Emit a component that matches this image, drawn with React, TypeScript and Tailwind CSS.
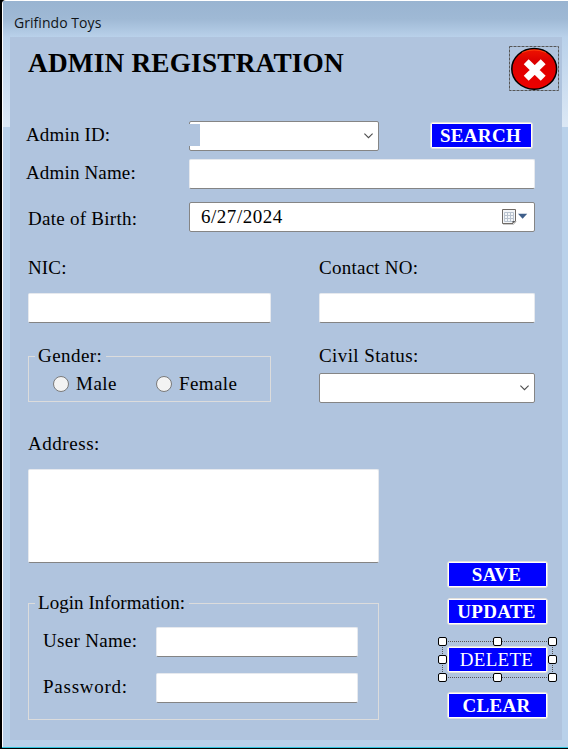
import type { ReactNode } from 'react';

function Label({ children, className = '' }: { children: ReactNode; className?: string }) {
  return <span className={`block whitespace-nowrap text-[19px] leading-[22px] ${className}`}>{children}</span>;
}

function TextBox({ className = '' }: { className?: string }) {
  return (
    <div
      className={`shrink-0 rounded-[2px] border border-[#e6e9ee] border-b-[#848484] bg-white ${className}`}
    />
  );
}

function Chevron() {
  return (
    <svg width="9" height="6" viewBox="0 0 9 6" fill="none" className="shrink-0">
      <path d="M0.4 0.6 4.5 4.7 8.6 0.6" stroke="#4d4d4d" strokeWidth="1.1" />
    </svg>
  );
}

function ComboBox({ className = '', children }: { className?: string; children?: ReactNode }) {
  return (
    <div
      className={`relative flex h-[30px] shrink-0 items-center justify-end rounded-[2px] border border-[#858585] bg-white pr-[5px] ${className}`}
    >
      {children}
      <Chevron />
    </div>
  );
}

function ActionButton({ children, className = '' }: { children: ReactNode; className?: string }) {
  return (
    <div
      className={`h-[27px] shrink-0 rounded-[3px] border border-[#e4e2de] bg-white p-px text-white ${className}`}
    >
      <div className="flex h-[23px] items-center justify-center bg-[#0000ff] pr-[2px] text-[19px] leading-[22px]">
        {children}
      </div>
    </div>
  );
}

function Radio({ label, className = '' }: { label: string; className?: string }) {
  return (
    <div className="flex items-center gap-[7px]">
      <span className="size-4 rounded-full border border-[#7a7a7a] bg-[#f3f3f3]" />
      <Label className={className}>{label}</Label>
    </div>
  );
}

function GroupBox({
  title,
  className = '',
  titleClassName = '',
  children,
}: {
  title: string;
  className?: string;
  titleClassName?: string;
  children: ReactNode;
}) {
  return (
    <div className={`flex flex-col border border-t-0 border-[#dcdcdc] ${className}`}>
      <div className="flex h-px shrink-0 items-center">
        <span className="h-px w-[6px] bg-[#dcdcdc]" />
        <Label className={`pr-[4px] pb-[2px] pl-[3px] ${titleClassName}`}>{title}</Label>
        <span className="h-px flex-1 bg-[#dcdcdc]" />
      </div>
      {children}
    </div>
  );
}

function CalendarIcon() {
  return (
    <svg width="26" height="16" viewBox="0 0 26 16" className="shrink-0">
      <path d="M1 15.500h10.500l3-3" stroke="#000" strokeOpacity="0.2" fill="none" />
      <path d="M0.500 0.500h13v11.500l-2.500 2.500h-10.500z" fill="#f4f6f8" stroke="#6f6a66" />
      <path
        d="M2.500 3.500h9v9h-9zM5.500 3.500v9M8.500 3.500v9M2.500 6.500h9M2.500 9.500h9"
        stroke="#b9c3cf"
        fill="none"
      />
      <path d="M10.500 14.500v-2.500h3z" fill="#555" />
      <path d="M16 4.700h9.200l-4.600 5z" fill="#3f5f8a" />
    </svg>
  );
}

function CloseButton() {
  return (
    <svg width="50" height="45" viewBox="0 0 50 45" className="shrink-0">
      <defs>
        <linearGradient id="closeFill" x1="0" y1="0" x2="0" y2="1">
          <stop offset="0" stopColor="#f01400" />
          <stop offset="0.3" stopColor="#dc0000" />
          <stop offset="1" stopColor="#ee0000" />
        </linearGradient>
      </defs>
      <rect x="0.5" y="0.5" width="49" height="44" fill="none" stroke="#555" strokeDasharray="3 1" />
      <ellipse cx="25.200" cy="22.900" rx="22.400" ry="20.300" fill="url(#closeFill)" stroke="#000" strokeWidth="1.500" />
      <path d="M13 6.500Q25 1.500 37 6.500" fill="none" stroke="#ff4a10" strokeWidth="0.800" />
      <path d="M17.200 15.700 34.200 32.300M34.200 15.700 17.200 32.300" stroke="#fff" strokeWidth="7" fill="none" />
    </svg>
  );
}

const handleSpots = [
  'left-[-9px] top-[-9px]',
  'left-[46px] top-[-9px]',
  'left-[101px] top-[-9px]',
  'left-[-9px] top-[9px]',
  'left-[101px] top-[9px]',
  'left-[-9px] top-[27px]',
  'left-[46px] top-[27px]',
  'left-[101px] top-[27px]',
];

export default function App() {
  return (
    <div className="flex h-[749px] w-[568px] flex-col overflow-hidden bg-black pl-[2px] font-['Liberation_Serif','Times_New_Roman',serif] text-black">
      <div className="flex h-[747px] flex-col rounded-tl-[4px] border-t border-l border-white bg-[#b9d1ea]">
        <div className="flex h-9 shrink-0 items-center bg-linear-to-b from-[#99b4d1] via-[#9fb9d5] to-[#b9d1ea] pt-[6px] pl-[11px] font-['Open_Sans','Noto_Sans',sans-serif] text-[14px] text-[#101418]">
          <span className="tracking-[0.05px]">Grifindo Toys</span>
        </div>
        <div className="flex h-[710px] shrink-0">
          <div className="w-[7px] shrink-0">
            <div className="h-[90px] bg-linear-to-b from-[#b9d1ea] to-[#dce8f5]" />
          </div>
          <main className="flex h-[703px] w-[552px] shrink-0 flex-col bg-[#b0c4de]">
            <div className="flex h-[84px] shrink-0 items-start justify-between pt-[9px] pr-[3px] pl-[18px]">
              <h1 className="pt-px text-[27.3px] leading-[32px] font-bold tracking-[0.18px] whitespace-nowrap">
                ADMIN REGISTRATION
              </h1>
              <CloseButton />
            </div>

            <div className="flex h-[38px] shrink-0 items-start pl-[16px]">
              <Label className="w-[163px] pt-[3px] tracking-[0.15px]">Admin ID:</Label>
              <ComboBox className="w-[190px]">
                <span className="absolute top-[2px] left-[-1px] h-[22px] w-[11px] bg-[#b0c4de]" />
              </ComboBox>
              <ActionButton className="mt-px ml-[51px] w-[103px] font-bold tracking-[0.3px]">SEARCH</ActionButton>
            </div>

            <div className="flex h-[43px] shrink-0 items-start pl-[16px]">
              <Label className="w-[163px] pt-[3px] tracking-[0.15px]">Admin Name:</Label>
              <TextBox className="h-[30px] w-[346px]" />
            </div>

            <div className="flex h-[54px] shrink-0 items-start pl-[18px]">
              <Label className="w-[161px] pt-[6px] tracking-[0.27px]">Date of Birth:</Label>
              <div className="flex h-[30px] w-[346px] items-center justify-between rounded-[2px] border border-[#858585] bg-white pr-[6px] pl-[11px]">
                <Label className="tracking-[0.53px]">6/27/2024</Label>
                <CalendarIcon />
              </div>
            </div>

            <div className="flex shrink-0 gap-[48px] pl-[18px]">
              <div className="flex w-[243px] flex-col">
                <Label className="pt-px tracking-[0.15px]">NIC:</Label>
                <TextBox className="mt-[14px] h-[30px] w-full" />
                <GroupBox title="Gender:" titleClassName="tracking-[0.45px]" className="mt-[33px] h-[46px]">
                  <div className="flex gap-[39px] pt-[16px] pl-[24px]">
                    <Radio label="Male" className="tracking-[0.5px]" />
                    <Radio label="Female" className="tracking-[0.4px]" />
                  </div>
                </GroupBox>
              </div>
              <div className="flex w-[216px] flex-col">
                <Label className="pt-px tracking-[0.25px]">Contact NO:</Label>
                <TextBox className="mt-[14px] h-[30px] w-full" />
                <Label className="mt-[22px] tracking-[0.4px]">Civil Status:</Label>
                <ComboBox className="mt-[6px] w-full" />
              </div>
            </div>

            <div className="mt-[30px] flex pl-[18px]">
              <div className="flex w-[351px] shrink-0 flex-col">
                <Label className="tracking-[0.55px]">Address:</Label>
                <TextBox className="mt-[14px] h-[94px] w-full" />
                <GroupBox
                  title="Login Information:"
                  titleClassName="tracking-[0.05px]"
                  className="mt-[40px] h-[117px]"
                >
                  <div className="mt-[23px] flex pl-[14px]">
                    <Label className="w-[113px] pt-[3px] tracking-[0.3px]">User Name:</Label>
                    <TextBox className="h-[30px] w-[202px]" />
                  </div>
                  <div className="mt-[16px] flex pl-[14px]">
                    <Label className="w-[113px] pt-[3px] tracking-[0.75px]">Password:</Label>
                    <TextBox className="h-[30px] w-[202px]" />
                  </div>
                </GroupBox>
              </div>
              <div className="flex flex-col pt-[128px] pl-[68px]">
                <ActionButton className="w-[101px] font-bold tracking-[0.3px]">SAVE</ActionButton>
                <ActionButton className="mt-[10px] w-[101px] font-bold tracking-[0.3px]">UPDATE</ActionButton>
                <div className="relative mt-[21px]">
                  <ActionButton className="w-[101px] tracking-[0.3px]">DELETE</ActionButton>
                  <div className="absolute top-[-5px] left-[-5px] h-[37px] w-[111px] border border-dotted border-[#555]" />
                  {handleSpots.map((spot) => (
                    <span key={spot} className={`absolute size-[9px] rounded-[2px] border border-black bg-white ${spot}`} />
                  ))}
                </div>
                <ActionButton className="mt-[19px] w-[101px] font-bold tracking-[0.3px]">CLEAR</ActionButton>
              </div>
            </div>
          </main>
          <div className="flex-1">
            <div className="h-[90px] bg-linear-to-b from-[#b9d1ea] to-[#dce8f5]" />
          </div>
        </div>
      </div>
      <div className="h-px shrink-0 bg-[#2fc4dc]" />
    </div>
  );
}
